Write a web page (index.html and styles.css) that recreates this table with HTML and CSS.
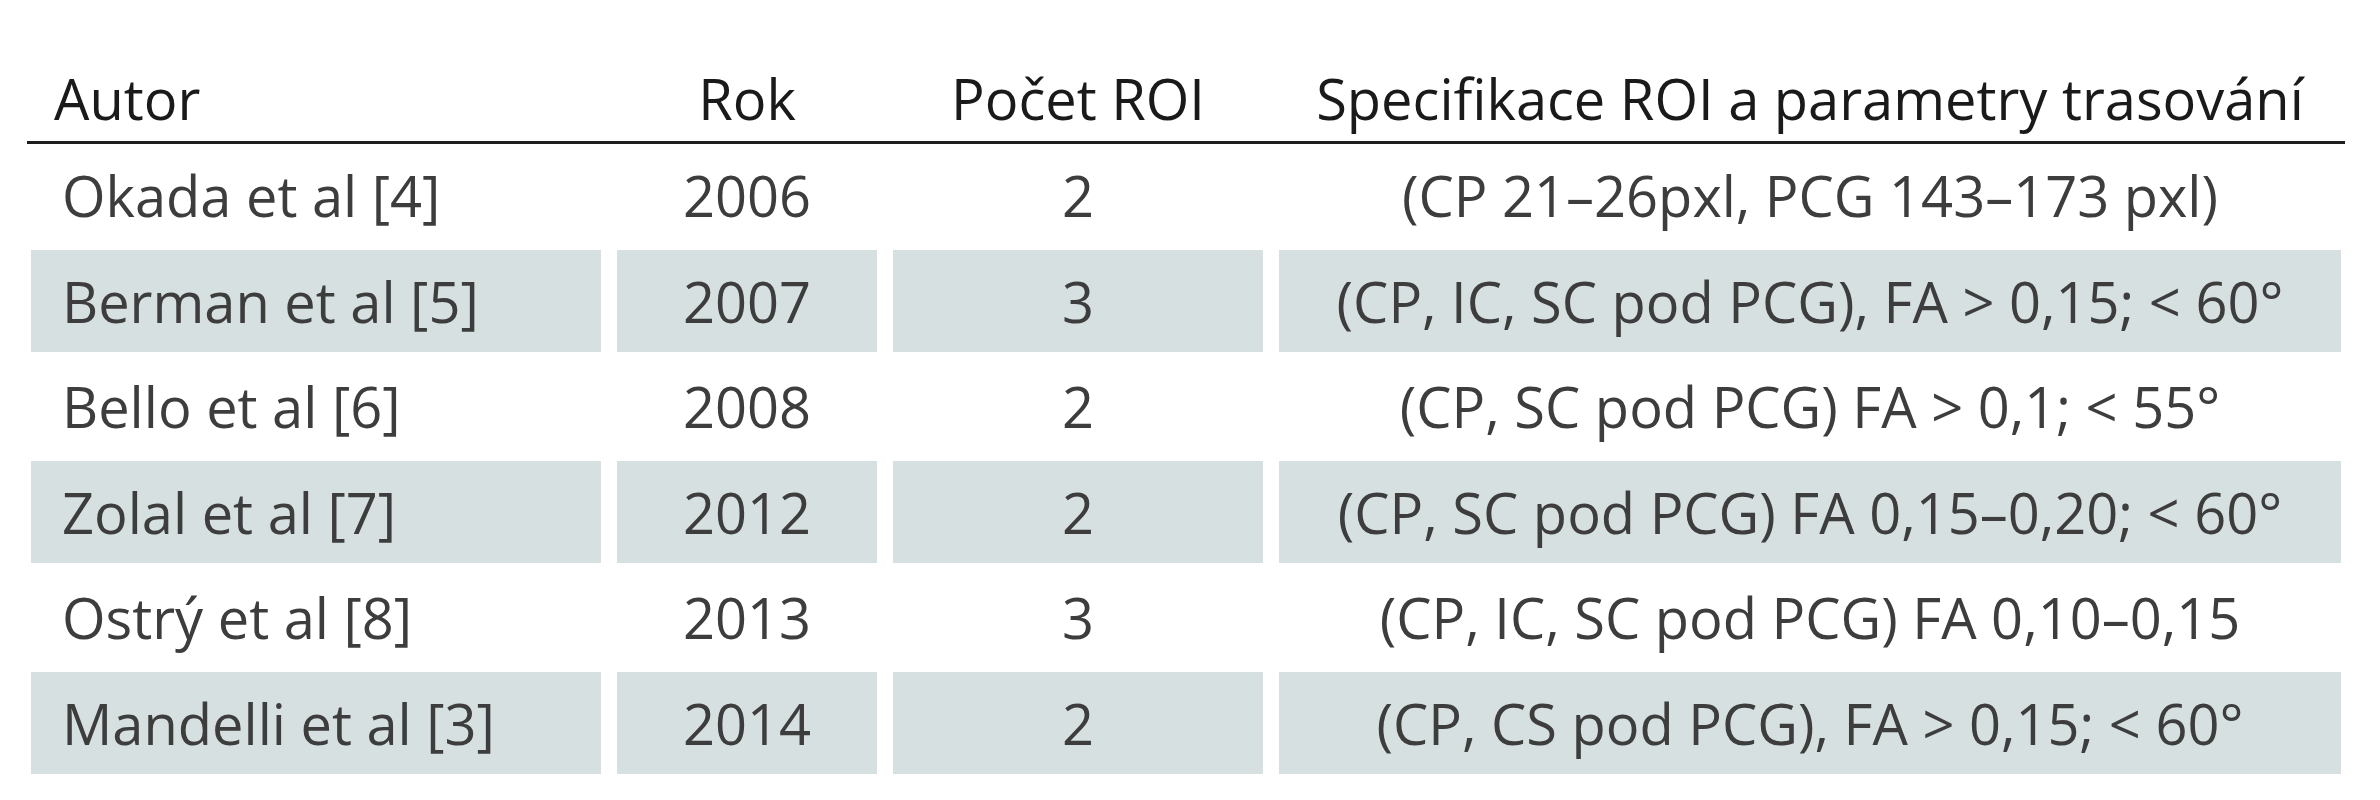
FILE: index.html
```html
<!DOCTYPE html>
<html lang="cs">
<head>
<meta charset="utf-8">
<title>Tabulka</title>
<link rel="stylesheet" href="styles.css">
</head>
<body>
<div class="table">
  <div class="head">
    <div class="hc first">Autor</div>
    <div class="hc">Rok</div>
    <div class="hc">Počet ROI</div>
    <div class="hc">Specifikace ROI a parametry trasování</div>
  </div>
  <div class="body">
    <div class="row">
      <div class="c first">Okada et al [4]</div>
      <div class="c">2006</div>
      <div class="c">2</div>
      <div class="c">(CP 21–26pxl, PCG 143–173 pxl)</div>
    </div>
    <div class="row shaded">
      <div class="c first">Berman et al [5]</div>
      <div class="c">2007</div>
      <div class="c">3</div>
      <div class="c">(CP, IC, SC pod PCG), FA &gt; 0,15; &lt; 60°</div>
    </div>
    <div class="row">
      <div class="c first">Bello et al [6]</div>
      <div class="c">2008</div>
      <div class="c">2</div>
      <div class="c">(CP, SC pod PCG) FA &gt; 0,1; &lt; 55°</div>
    </div>
    <div class="row shaded">
      <div class="c first">Zolal et al [7]</div>
      <div class="c">2012</div>
      <div class="c">2</div>
      <div class="c">(CP, SC pod PCG) FA 0,15–0,20; &lt; 60°</div>
    </div>
    <div class="row">
      <div class="c first">Ostrý et al [8]</div>
      <div class="c">2013</div>
      <div class="c">3</div>
      <div class="c">(CP, IC, SC pod PCG) FA 0,10–0,15</div>
    </div>
    <div class="row shaded">
      <div class="c first">Mandelli et al [3]</div>
      <div class="c">2014</div>
      <div class="c">2</div>
      <div class="c">(CP, CS pod PCG), FA &gt; 0,15; &lt; 60°</div>
    </div>
  </div>
</div>
</body>
</html>
```
FILE: styles.css
```css
html, body {
  margin: 0;
  padding: 0;
  background: #ffffff;
}

.table {
  width: 2310px;
  margin-left: 31px;
  font-family: "Open Sans", "Noto Sans", sans-serif;
  font-size: 56px;
  line-height: 76px;
}

.head {
  display: grid;
  grid-template-columns: 570px 260px 370px 1062px;
  column-gap: 16px;
  margin: 0 -4px;
  padding: 60px 4px 5px;
  border-bottom: 3px solid #1e1e1e;
  color: #1a1a1a;
}

.hc {
  text-align: center;
  white-space: nowrap;
}

.hc.first {
  text-align: left;
  padding-left: 23px;
}

.body {
  display: grid;
  row-gap: 3.5px;
}

.row {
  display: grid;
  grid-template-columns: 570px 260px 370px 1062px;
  column-gap: 16px;
  height: 102px;
  color: #3d3d3d;
}

.c {
  display: flex;
  align-items: center;
  justify-content: center;
  white-space: nowrap;
}

.c.first {
  justify-content: flex-start;
  padding-left: 31px;
}

.row.shaded .c {
  background: #d6e0e1;
}
```
